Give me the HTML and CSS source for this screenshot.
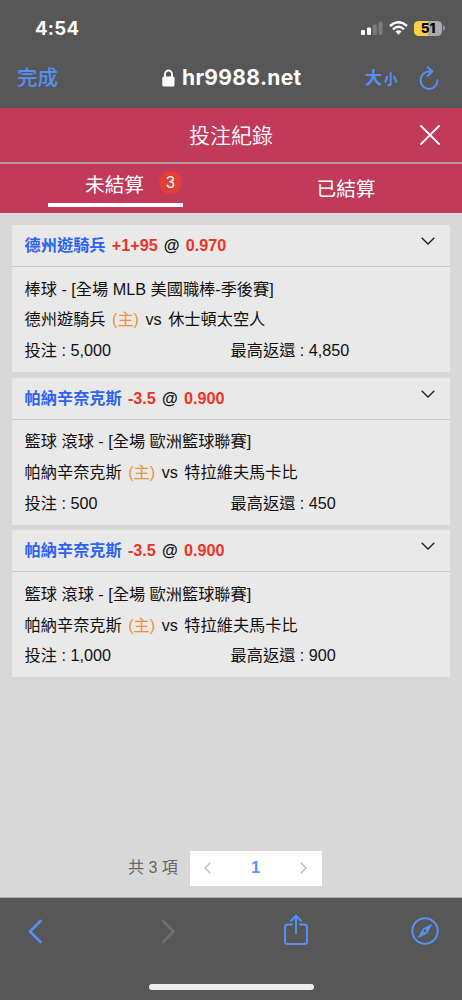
FILE: index.html
```html
<!DOCTYPE html>
<html lang="zh-Hant">
<head>
<meta charset="utf-8">
<meta name="viewport" content="width=device-width, initial-scale=1">
<title>投注紀錄</title>
<link rel="stylesheet" href="styles.css">
</head>
<body>
<div class="phone">
  <header class="browser-top">
    <div class="status">
      <span class="clock">4:54</span>
      <div class="status-icons">
        <svg class="signal" width="22" height="14" viewBox="0 0 22 14"><rect x="0" y="9" width="4" height="5" rx="1.2" fill="#fff"/><rect x="6" y="6.5" width="4" height="7.5" rx="1.2" fill="#fff"/><rect x="11.8" y="3.5" width="4" height="10.5" rx="1.2" fill="#7b7b7b"/><rect x="17.5" y="0.5" width="4" height="13.5" rx="1.2" fill="#7b7b7b"/></svg>
        <svg class="wifi" width="19" height="14" viewBox="0 0 19 14" fill="none" stroke="#fff" stroke-width="2.5"><path d="M1 5Q9.500-2.500 18 5"/><path d="M4 8.300Q9.500 3.300 15 8.300"/><path d="M6.500 10.600Q9.500 8 12.500 10.600L9.500 13.700Z" fill="#fff" stroke="none"/></svg>
        <div class="battery"><span>51</span></div>
        <svg class="cap" width="2" height="6" viewBox="0 0 2 6"><path d="M0 0Q2 1 2 3T0 6Z" fill="#9b9b9b"/></svg>
      </div>
    </div>
    <div class="address">
      <span class="done">完成</span>
      <div class="site">
        <svg width="13" height="18" viewBox="0 0 13 18"><path d="M3 9V5.200a3.500 3.700 0 0 1 7 0V9" fill="none" stroke="#fff" stroke-width="1.900"/><rect x="0.300" y="7.600" width="12.200" height="10" rx="1.700" fill="#fff"/></svg>
        <span>hr9988.net</span>
      </div>
      <span class="size"><b>大</b><small>小</small></span>
      <svg class="reload" width="22" height="25" viewBox="0 0 22 25" fill="none" stroke="#568ff5" stroke-width="2" stroke-linecap="round" stroke-linejoin="round"><path d="M13.200 5.500H11A8.500 8.700 0 1 0 19.500 14.200"/><path d="M9.800 1.200L14.200 5.500L9.800 9.800"/></svg>
    </div>
  </header>

  <div class="title-bar">
    <h1>投注紀錄</h1>
    <svg class="close" width="20" height="20" viewBox="0 0 20 20" fill="none" stroke="#fff" stroke-width="1.800" stroke-linecap="round"><path d="M1 1L19 19M19 1L1 19"/></svg>
  </div>
  <nav class="tabs">
    <div class="tab active"><div class="tab-label"><span>未結算</span><span class="badge">3</span></div></div>
    <div class="tab"><span>已結算</span></div>
  </nav>

  <main class="content">
    <section class="card">
      <div class="card-head"><span><b class="team">德州遊騎兵</b> <b class="odds">+1+95</b> <b>@</b> <b class="odds">0.970</b></span>
        <svg class="chevron" width="14" height="8" viewBox="0 0 14 8"><path d="M0.700 0.800L7 7L13.300 0.800"/></svg></div>
      <div class="card-body">
        <div class="row">棒球 - [全場 MLB 美國職棒-季後賽]</div>
        <div class="row match">德州遊騎兵 <span class="home">(主)</span> vs 休士頓太空人</div>
        <div class="row split"><span>投注 : 5,000</span><span>最高返還 : 4,850</span></div>
      </div>
    </section>
    <section class="card">
      <div class="card-head"><span><b class="team">帕納辛奈克斯</b> <b class="odds">-3.5</b> <b>@</b> <b class="odds">0.900</b></span>
        <svg class="chevron" width="14" height="8" viewBox="0 0 14 8"><path d="M0.700 0.800L7 7L13.300 0.800"/></svg></div>
      <div class="card-body">
        <div class="row">籃球 滾球 - [全場 歐洲籃球聯賽]</div>
        <div class="row match">帕納辛奈克斯 <span class="home">(主)</span> vs 特拉維夫馬卡比</div>
        <div class="row split"><span>投注 : 500</span><span>最高返還 : 450</span></div>
      </div>
    </section>
    <section class="card">
      <div class="card-head"><span><b class="team">帕納辛奈克斯</b> <b class="odds">-3.5</b> <b>@</b> <b class="odds">0.900</b></span>
        <svg class="chevron" width="14" height="8" viewBox="0 0 14 8"><path d="M0.700 0.800L7 7L13.300 0.800"/></svg></div>
      <div class="card-body">
        <div class="row">籃球 滾球 - [全場 歐洲籃球聯賽]</div>
        <div class="row match">帕納辛奈克斯 <span class="home">(主)</span> vs 特拉維夫馬卡比</div>
        <div class="row split"><span>投注 : 1,000</span><span>最高返還 : 900</span></div>
      </div>
    </section>

    <div class="pagination">
      <span class="total">共 3 項</span>
      <div class="pager">
        <svg width="7" height="12" viewBox="0 0 7 12"><path d="M6.200 0.800L1 6L6.200 11.200"/></svg>
        <b>1</b>
        <svg width="7" height="12" viewBox="0 0 7 12"><path d="M0.800 0.800L6 6L0.800 11.200"/></svg>
      </div>
    </div>
  </main>

  <footer class="browser-bottom">
    <div class="tools">
      <svg class="back" width="15" height="25" viewBox="0 0 15 25" fill="none" stroke="#568ff5" stroke-width="2.600" stroke-linecap="round" stroke-linejoin="round"><path d="M12.500 2L2 12.500L12.500 23"/></svg>
      <svg class="forward" width="15" height="25" viewBox="0 0 15 25" fill="none" stroke="#6f6f6f" stroke-width="2.600" stroke-linecap="round" stroke-linejoin="round"><path d="M2 2L12.500 12.500L2 23"/></svg>
      <svg class="share" width="26" height="32" viewBox="0 0 26 32" fill="none" stroke="#568ff5" stroke-width="2" stroke-linecap="round" stroke-linejoin="round"><path d="M9 10.500H4.500a2.500 2.500 0 0 0-2.500 2.500V27.500a2.500 2.500 0 0 0 2.500 2.500H21.500a2.500 2.500 0 0 0 2.500-2.500V13a2.500 2.500 0 0 0-2.500-2.500H17M13 19.500V2M8 6.700L13 1.700L18 6.700"/></svg>
      <svg class="compass" width="28" height="28" viewBox="0 0 28 28"><circle cx="14" cy="14" r="12.700" fill="none" stroke="#568ff5" stroke-width="2"/><path d="M20.500 7.500L16 16L7.500 20.500L12 12Z" fill="#568ff5" stroke="#568ff5" stroke-linejoin="round"/><circle cx="14" cy="14" r="1.400" fill="#575757"/></svg>
    </div>
    <div class="home-bar"></div>
  </footer>
</div>
</body>
</html>
```

FILE: styles.css
```css
* { box-sizing: border-box; }
body { margin: 0; background: #575757; }
svg { display: block; flex: none; }
.phone {
  width: 462px; height: 1000px; overflow: hidden;
  display: flex; flex-direction: column;
  font-family: "Liberation Sans", "Noto Sans CJK TC", sans-serif;
}
.browser-top { height: 108px; background: #575757; color: #fff; flex: none; font-family: Inter, "Noto Sans CJK TC", sans-serif; }
.status { height: 56px; padding: 0 20px 0 35px; display: flex; align-items: center; justify-content: space-between; }
.clock { font-size: 18.5px; font-weight: 700; line-height: 24px; letter-spacing: 0.3px; }
.status-icons { display: flex; align-items: center; }
.wifi { margin-left: 6px; }
.battery {
  width: 28px; height: 15px; margin-left: 6px; border-radius: 4.5px;
  background: linear-gradient(90deg, #f8d244 51%, #ababab 51%);
  color: #000; font-size: 13.5px; font-weight: 800; line-height: 15px; text-align: center; letter-spacing: -0.2px;
}
.cap { margin-left: 1px; margin-right: -3px; }
.address { height: 44px; display: flex; align-items: center; padding: 0 22px 0 17px; }
.done { width: 145px; font-size: 20.500px; color: #568ff5; line-height: 30px; font-weight: 500; }
.site { width: 203px; display: flex; align-items: center; gap: 7px; font-size: 21px; font-weight: 700; line-height: 30px; letter-spacing: 0.35px; }
.size { flex: 1; display: flex; align-items: baseline; gap: 2px; color: #568ff5; line-height: 30px; }
.size b { font-size: 17px; }
.size small { font-size: 13.5px; font-weight: 700; }

.title-bar {
  height: 56px; flex: none; background: #c13a59; color: #fff; border-bottom: 2px solid #ba9b9f;
  display: grid; grid-template-columns: 42px 1fr 42px; align-items: center;
}
.title-bar h1 { grid-column: 2; margin: 0; padding-top: 2px; font-size: 21px; font-weight: 350; line-height: 30px; text-align: center; }
.tabs { height: 49px; flex: none; background: #c13a59; color: #fff; display: grid; grid-template-columns: 1fr 1fr; font-size: 19.7px; line-height: 28px; }
.tab { display: flex; justify-content: center; padding-top: 11px; }
.tab:last-child { padding-right: 1px; }
.tab.active { padding-top: 0; }
.tab-label { width: 135px; height: 43px; padding: 7px 0 0 37px; border-bottom: 4px solid #fff; display: flex; }
.badge { width: 23px; height: 23px; margin-left: 15px; border-radius: 50%; background: #e13f38; font-size: 16px; line-height: 23px; text-align: center; }

.content { height: 685px; flex: none; background: #d8d8d8; border-bottom: 1px solid #aaa; padding: 12px 12px 0; display: flex; flex-direction: column; gap: 5.7px; }
.card { height: 147px; flex: none; background: #e9e9e9; color: #111; font-size: 16.200px; }
.card-head { height: 42px; border-bottom: 1px solid #c9c9c9; padding: 0 15px 0 12.600px; display: flex; justify-content: space-between; line-height: 41px; white-space: nowrap; word-spacing: 1.7px; }
.team { color: #2e63f0; }
.odds { color: #ee3427; }
.chevron { margin-top: 12px; fill: none; stroke: #222; stroke-width: 1.4; }
.card-body { padding: 6.500px 12.600px 0; }
.row { height: 30.700px; line-height: 30.700px; white-space: nowrap; }
.match { word-spacing: 2px; }
.split { display: grid; grid-template-columns: 206px 1fr; }
.home { color: #eb933b; }
.pagination { margin-top: auto; margin-bottom: 11.500px; padding-left: 116px; display: flex; align-items: center; gap: 12.500px; }
.total { font-size: 16px; color: #666; line-height: 34px; white-space: nowrap; }
.pager { width: 132px; height: 35px; background: #fff; padding: 0 15px 0 14px; display: flex; align-items: center; justify-content: space-between; color: #4d99f6; font-size: 16px; }
.pager svg { fill: none; stroke: #c0c0c6; stroke-width: 1.5; }

.browser-bottom { height: 102px; flex: none; background: #575757; }
.tools { height: 86px; padding: 0 23px 20px 28px; display: flex; align-items: center; }
.forward { margin-left: 117.5px; }
.share { margin-left: 107px; margin-top: -2px; }
.compass { margin-left: 102.5px; }
.home-bar { width: 165px; height: 6px; border-radius: 3px; background: #eee; margin: 0 auto; }
```
